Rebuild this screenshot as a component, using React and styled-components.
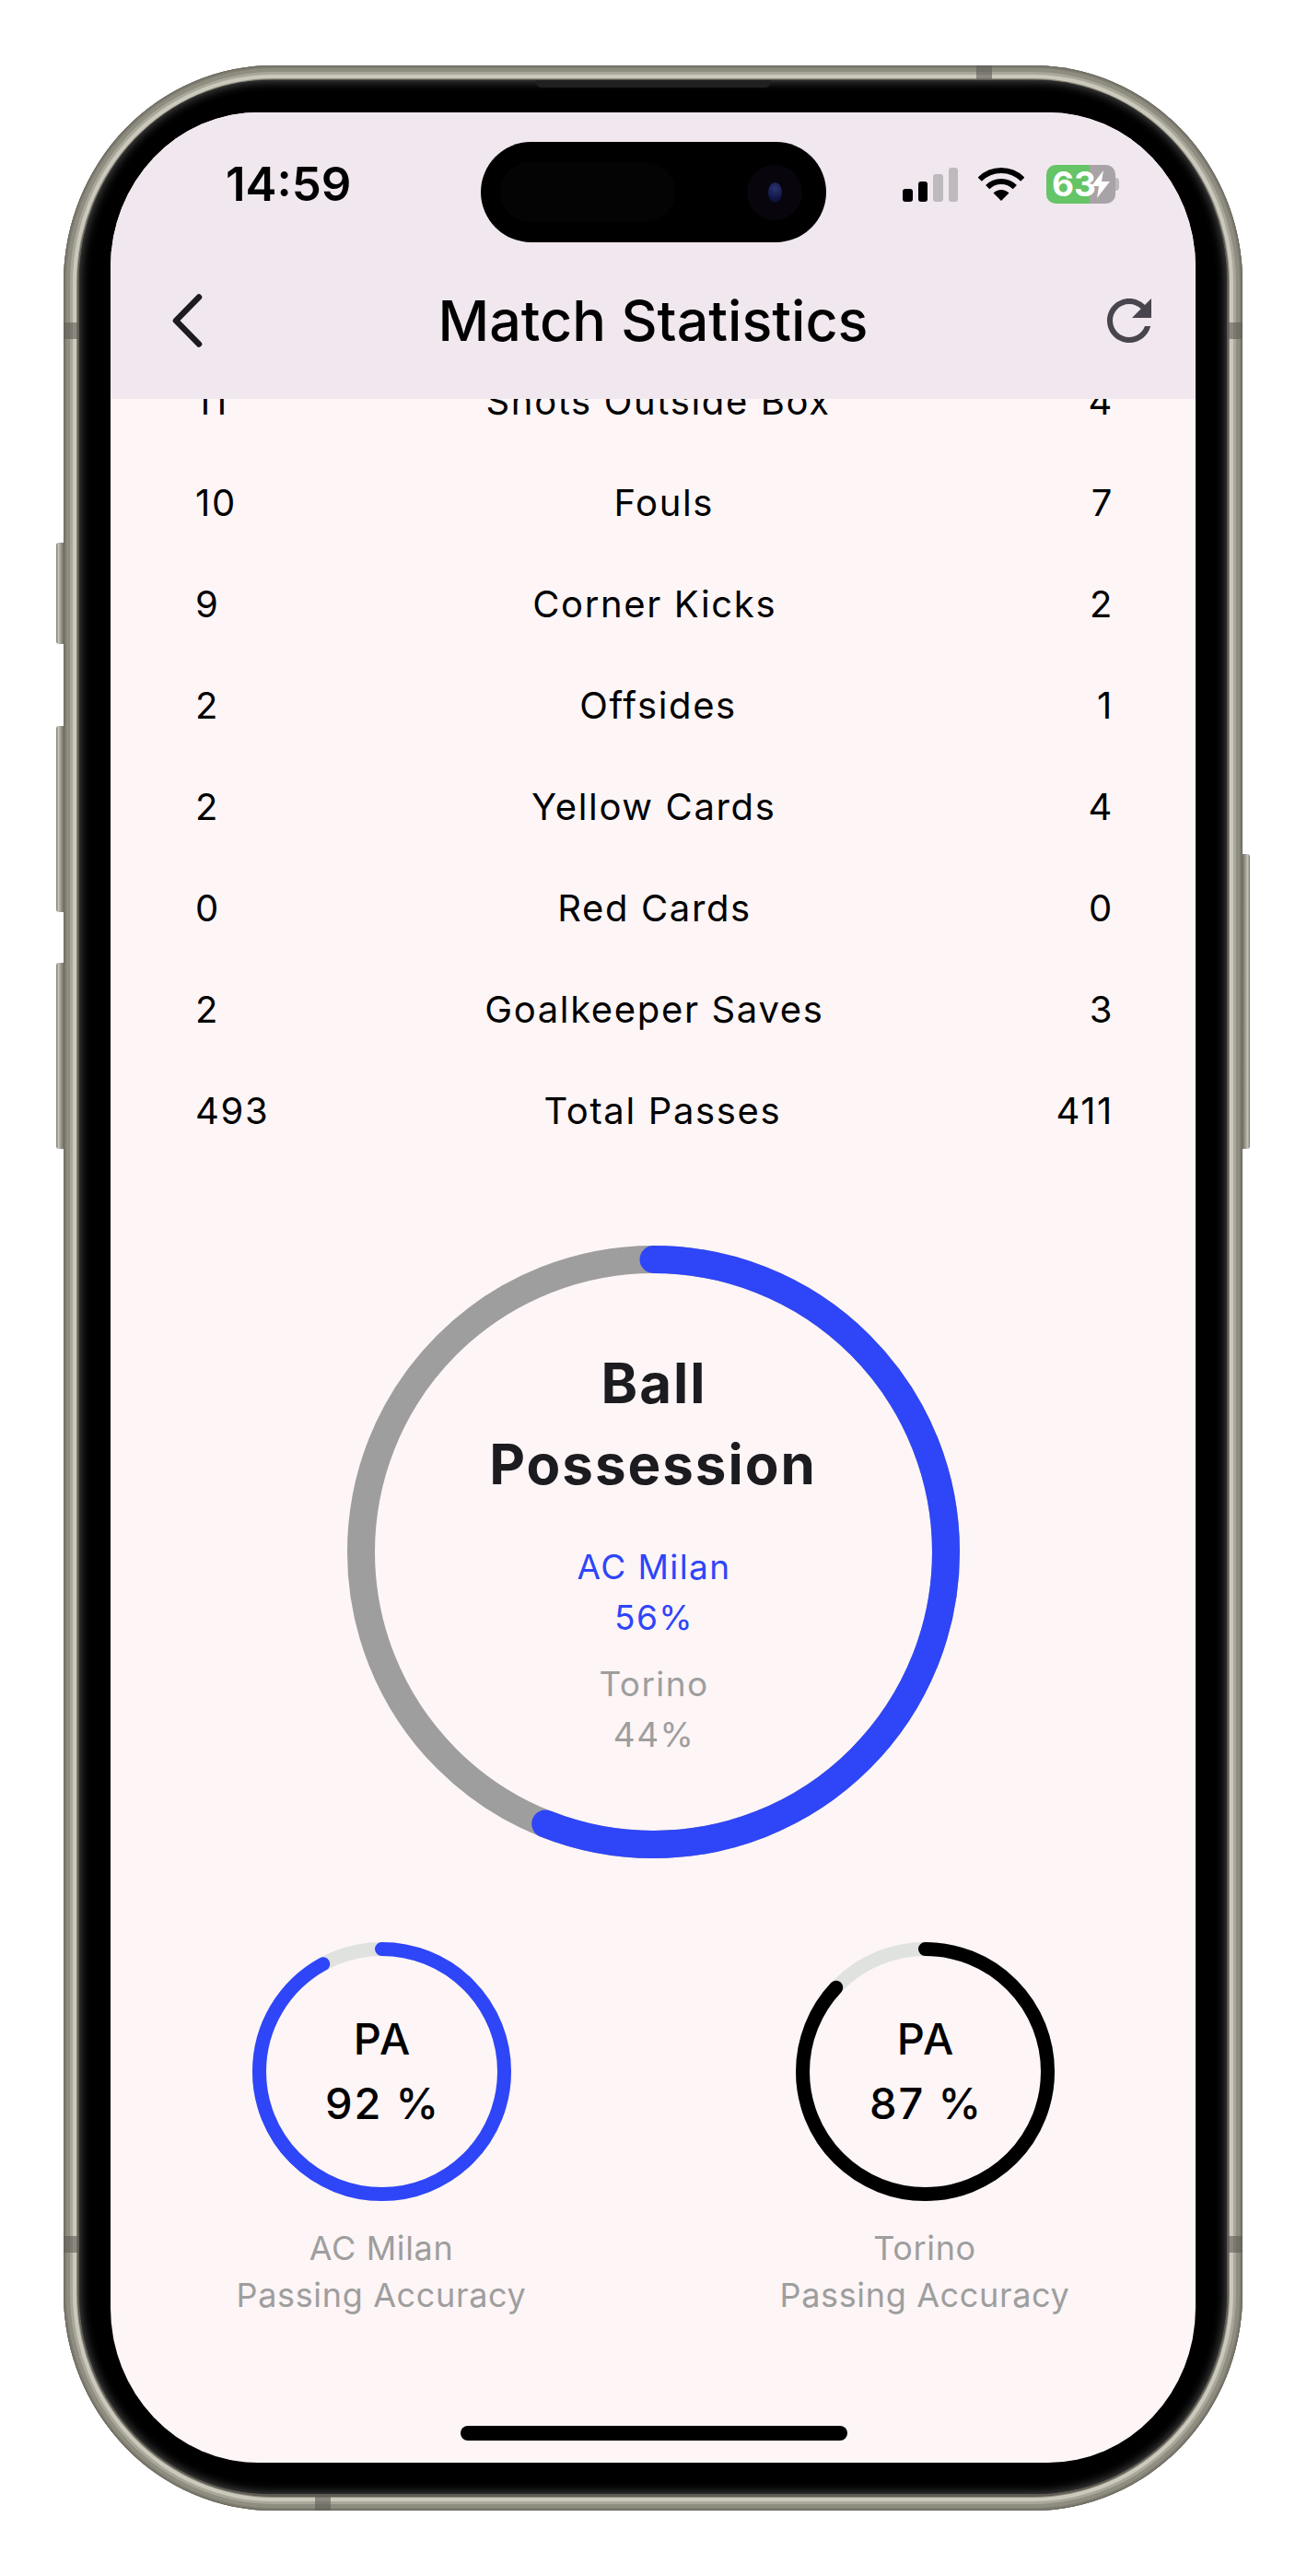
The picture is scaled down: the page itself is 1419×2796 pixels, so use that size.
import React from 'react';
import styled, { createGlobalStyle } from 'styled-components';

const BLUE = '#2e45f8';
const GREY = '#9e9e9e';

const stats = [
  ['11', 'Shots Outside Box', '4'],
  ['10', 'Fouls', '7'],
  ['9', 'Corner Kicks', '2'],
  ['2', 'Offsides', '1'],
  ['2', 'Yellow Cards', '4'],
  ['0', 'Red Cards', '0'],
  ['2', 'Goalkeeper Saves', '3'],
  ['493', 'Total Passes', '411'],
];

const GlobalStyle = createGlobalStyle`
  html, body {
    margin: 0;
    padding: 0;
    background: #fff;
  }
  body {
    font-family: Inter, "Liberation Sans", sans-serif;
  }
`;

const Page = styled.div`
  width: 1419px;
  height: 2796px;
  padding: 71px 0 0 69px;
  box-sizing: border-box;
`;
const Frame = styled.div`
  position: relative;
  width: 1280px;
  height: 2654px;
  padding: 16px 17px 18px;
  box-sizing: border-box;
  border-radius: 228px / 236px;
  background: #5f5d54;
  box-shadow:
    inset 0 0 0 1px #6c6a61,
    inset 0 0 0 3px #7f7d72,
    inset 0 0 0 7px #8f8c80,
    inset 0 0 0 10px #a9a69a,
    inset 0 0 0 14px #cbc8bc,
    inset 0 0 0 15px #8f8d81;
`;
const SideButton = styled.div`
  position: absolute;
  top: ${(p) => p.$top}px;
  height: ${(p) => p.$height}px;
  width: 8px;
  ${(p) => (p.$right ? 'left: 100%;' : 'right: 100%;')}
  border-radius: ${(p) => (p.$right ? '0 3px 3px 0' : '3px 0 0 3px')};
  background: linear-gradient(
    ${(p) => (p.$right ? '270deg' : '90deg')},
    #7b796f 0,
    #c6c3b7 30%,
    #a09d91 60%,
    #73716a 100%
  );
`;
const Band = styled.div`
  position: absolute;
  background: #5e5c55;
  opacity: 0.6;
  ${(p) => p.$place}
`;
const Speaker = styled.div`
  position: absolute;
  left: 513px;
  top: 16px;
  width: 255px;
  height: 8px;
  background: #202020;
  border-radius: 0 0 6px 6px;
  z-index: 2;
`;
const Bezel = styled.div`
  height: 100%;
  padding: 35px 34px 34px;
  box-sizing: border-box;
  border-radius: 208px / 218px;
  background: #000;
  box-shadow: inset 0 0 11px 1px #515151;
`;
const Screen = styled.div`
  position: relative;
  height: 100%;
  border-radius: 160px / 168px;
  overflow: hidden;
  background: #fdf5f6;
  display: flex;
  flex-direction: column;
`;
const Island = styled.div`
  position: absolute;
  left: 402px;
  top: 32px;
  width: 375px;
  height: 109px;
  border-radius: 55px;
  background: #000;
  z-index: 3;
  display: flex;
  align-items: center;
  justify-content: space-between;
  padding: 0 26px 0 21px;
  box-sizing: border-box;
`;
const Sensor = styled.div`
  width: 190px;
  height: 65px;
  border-radius: 33px;
  background: #040404;
`;
const Camera = styled.div`
  width: 60px;
  height: 60px;
  border-radius: 50%;
  display: grid;
  place-items: center;
  background: #08050c;
`;
const Lens = styled.div`
  width: 15px;
  height: 22px;
  border-radius: 50%;
  background: radial-gradient(circle at 50% 30%, #2e3370 0, #10174a 60%, #0a0e28 100%);
`;
const Header = styled.header`
  position: relative;
  z-index: 2;
  height: 311px;
  flex: none;
  background: #f0e8ee;
  display: flex;
  flex-direction: column;
`;
const StatusBar = styled.div`
  height: 60px;
  margin-top: 48px;
  padding: 0 87px 0 125px;
  display: flex;
  align-items: center;
  justify-content: space-between;
`;
const Time = styled.span`
  font-size: 51px;
  font-weight: 600;
  color: #000;
  line-height: 60px;
`;
const StatusIcons = styled.div`
  display: flex;
  align-items: center;
`;
const Signal = styled.div`
  display: flex;
  align-items: flex-end;
  gap: 6px;
  height: 37px;
  margin-right: 22px;
`;
const SignalBar = styled.div`
  width: 10.5px;
  height: ${(p) => p.$h}px;
  border-radius: 3px;
  background: ${(p) => (p.$on ? '#000' : '#bdb9bd')};
`;
const Battery = styled.div`
  width: 75px;
  height: 42px;
  margin-left: 24px;
  position: relative;
  border-radius: 10px;
  background: linear-gradient(90deg, #65c466 63%, #a8a3a7 63%);
  color: #fff;
  font-size: 37px;
  font-weight: 700;
  line-height: 42px;
  display: flex;
  align-items: center;
  padding-left: 6px;
  box-sizing: border-box;
  &::after {
    content: '';
    position: absolute;
    left: 100%;
    top: 14px;
    width: 4px;
    height: 14px;
    border-radius: 0 4px 4px 0;
    background: #bdb9bd;
  }
`;
const Nav = styled.div`
  margin-top: 63px;
  height: 110px;
  padding: 0 36px;
  display: grid;
  grid-template-columns: 1fr auto 1fr;
  align-items: center;
`;
const NavIcon = styled.svg`
  display: block;
  justify-self: ${(p) => (p.$end ? 'end' : 'start')};
  margin-left: ${(p) => (p.$end ? 0 : 30)}px;
`;
const Title = styled.h1`
  margin: 0;
  font-size: 61px;
  font-weight: 500;
  line-height: 110px;
  color: #000;
`;
const Content = styled.main`
  flex: 1;
  min-height: 0;
`;
const StatList = styled.div`
  margin-top: -52px;
  padding: 0 89px 0 92px;
`;
const StatRow = styled.div`
  height: 110px;
  line-height: 110px;
  font-size: 40px;
  letter-spacing: 1.65px;
  color: #000;
  display: flex;
  justify-content: space-between;
`;
const PossessionWrap = styled.section`
  margin-top: 91px;
  display: flex;
  justify-content: center;
`;
const RingStack = styled.div`
  display: grid;
  width: ${(p) => p.$size}px;
  height: ${(p) => p.$size}px;
  & > * {
    grid-area: 1 / 1;
  }
`;
const RingText = styled.div`
  padding-top: ${(p) => p.$top}px;
  text-align: center;
`;
const BigTitle = styled.h2`
  margin: 0 0 40px;
  font-size: 60px;
  font-weight: 700;
  line-height: 88px;
  letter-spacing: 2px;
  text-indent: 2px;
  color: #1c1b1f;
`;
const TeamLine = styled.div`
  font-size: 37px;
  line-height: 55px;
  letter-spacing: 1.4px;
  text-indent: 2px;
  color: ${(p) => p.$color};
  margin-bottom: ${(p) => p.$gap || 0}px;
`;
const AccuracyRow = styled.section`
  margin-top: 91px;
  display: flex;
  justify-content: center;
  gap: 278px;
`;
const AccuracyCol = styled.div`
  width: 312px;
  display: flex;
  flex-direction: column;
  align-items: center;
`;
const SmallValue = styled.div`
  font-size: 47px;
  font-weight: 500;
  line-height: 70px;
  letter-spacing: 1.8px;
  text-indent: 3px;
  color: #000;
`;
const AccuracyLabel = styled.div`
  margin-top: 26px;
  font-size: 36px;
  line-height: 51px;
  letter-spacing: 0.65px;
  text-align: center;
  white-space: nowrap;
  color: ${GREY};
`;
const HomeIndicator = styled.div`
  position: absolute;
  left: 380px;
  bottom: 24px;
  width: 420px;
  height: 16px;
  border-radius: 8px;
  background: #000;
  z-index: 3;
`;

const Ring = ({ size, stroke, percent, color, track }) => {
  const r = (size - stroke) / 2;
  const c = 2 * Math.PI * r;
  return (
    <svg width={size} height={size} viewBox={`0 0 ${size} ${size}`}>
      <circle cx={size / 2} cy={size / 2} r={r} fill="none" stroke={track} strokeWidth={stroke} />
      <circle
        cx={size / 2}
        cy={size / 2}
        r={r}
        fill="none"
        stroke={color}
        strokeWidth={stroke}
        strokeLinecap="round"
        strokeDasharray={`${(c * percent) / 100} ${c}`}
        transform={`rotate(-90 ${size / 2} ${size / 2})`}
      />
    </svg>
  );
};

const Wifi = () => (
  <svg width="50" height="38" viewBox="0 0 50 38">
    <path d="M25 37 L16.5 28.5 A12 12 0 0 1 33.5 28.5 Z" fill="#000" />
    <path d="M10.2 22.2 A21 21 0 0 1 39.8 22.2" fill="none" stroke="#000" strokeWidth="6" />
    <path d="M1.7 13.7 A33 33 0 0 1 48.3 13.7" fill="none" stroke="#000" strokeWidth="6" />
  </svg>
);

const Bolt = styled.svg`
  position: absolute;
  right: 5px;
  top: 6px;
`;

const Accuracy = ({ value, team, color }) => (
  <AccuracyCol>
    <RingStack $size={281}>
      <Ring size={281} stroke={15} percent={value} color={color} track="#e0e2e0" />
      <RingText $top={70}>
        <SmallValue>PA</SmallValue>
        <SmallValue>{value} %</SmallValue>
      </RingText>
    </RingStack>
    <AccuracyLabel>
      {team}
      <br />
      Passing Accuracy
    </AccuracyLabel>
  </AccuracyCol>
);

const App = () => (
  <Page>
    <GlobalStyle />
    <Frame>
      <SideButton $top={518} $height={110} />
      <SideButton $top={717} $height={202} />
      <SideButton $top={974} $height={202} />
      <SideButton $right $top={856} $height={320} />
      <Band $place="left: 991px; top: 0; width: 17px; height: 16px;" />
      <Band $place="left: 273px; bottom: 0; width: 17px; height: 16px;" />
      <Band $place="left: 0; top: 279px; width: 17px; height: 18px;" />
      <Band $place="right: 0; top: 279px; width: 17px; height: 18px;" />
      <Band $place="left: 0; top: 2356px; width: 17px; height: 18px;" />
      <Band $place="right: 0; top: 2356px; width: 17px; height: 18px;" />
      <Speaker />
      <Bezel>
        <Screen>
          <Island>
            <Sensor />
            <Camera>
              <Lens />
            </Camera>
          </Island>
          <Header>
            <StatusBar>
              <Time>14:59</Time>
              <StatusIcons>
                <Signal>
                  <SignalBar $on $h={14} />
                  <SignalBar $on $h={22} />
                  <SignalBar $h={30} />
                  <SignalBar $h={37} />
                </Signal>
                <Wifi />
                <Battery>
                  63
                  <Bolt width="22" height="30" viewBox="0 0 22 30">
                    <path d="M14 0 L1 17 H9 L7 30 L21 12 H12 Z" fill="#fff" />
                  </Bolt>
                </Battery>
              </StatusIcons>
            </StatusBar>
            <Nav>
              <NavIcon width="36" height="60" viewBox="0 0 36 60">
                <path
                  d="M30 4.5 L5 30 L30 55.5"
                  fill="none"
                  stroke="#1d1b20"
                  strokeWidth="6.5"
                  strokeLinecap="round"
                  strokeLinejoin="round"
                />
              </NavIcon>
              <Title>Match Statistics</Title>
              <NavIcon $end width="72" height="72" viewBox="0 0 24 24">
                <path
                  fill="#49454f"
                  d="M17.65 6.35C16.2 4.9 14.21 4 12 4c-4.42 0-7.99 3.58-7.99 8s3.57 8 7.99 8c3.73 0 6.84-2.55 7.73-6h-2.08c-.82 2.33-3.04 4-5.65 4-3.31 0-6-2.69-6-6s2.69-6 6-6c1.66 0 3.14.69 4.22 1.78L13 11h7V4l-2.35 2.35z"
                />
              </NavIcon>
            </Nav>
          </Header>
          <Content>
            <StatList>
              {stats.map(([home, label, away]) => (
                <StatRow key={label}>
                  <span>{home}</span>
                  <span>{label}</span>
                  <span>{away}</span>
                </StatRow>
              ))}
            </StatList>
            <PossessionWrap>
              <RingStack $size={665}>
                <Ring size={665} stroke={30} percent={56} color={BLUE} track={GREY} />
                <RingText $top={105}>
                  <BigTitle>
                    Ball
                    <br />
                    Possession
                  </BigTitle>
                  <TeamLine $color={BLUE}>AC Milan</TeamLine>
                  <TeamLine $color={BLUE} $gap={17}>
                    56%
                  </TeamLine>
                  <TeamLine $color={GREY}>Torino</TeamLine>
                  <TeamLine $color={GREY}>44%</TeamLine>
                </RingText>
              </RingStack>
            </PossessionWrap>
            <AccuracyRow>
              <Accuracy value={92} team="AC Milan" color={BLUE} />
              <Accuracy value={87} team="Torino" color="#000" />
            </AccuracyRow>
          </Content>
          <HomeIndicator />
        </Screen>
      </Bezel>
    </Frame>
  </Page>
);

export default App;
